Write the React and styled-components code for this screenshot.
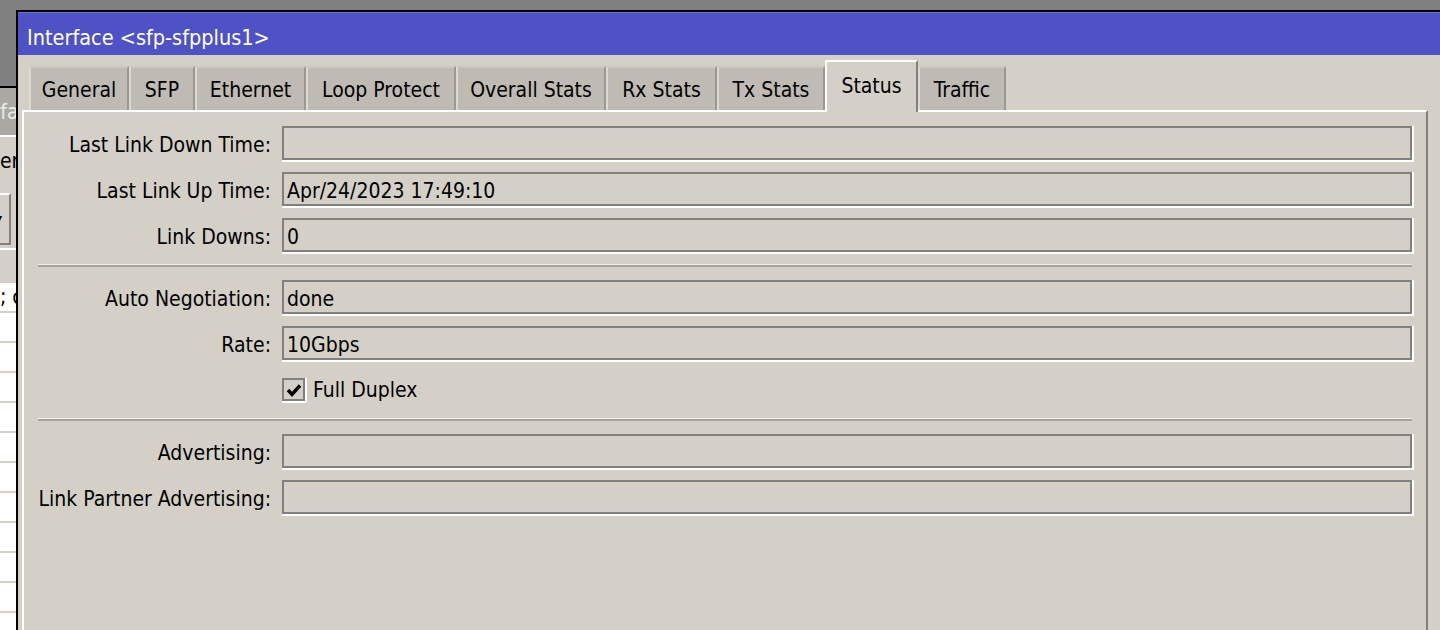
import React from "react";
import styled, { createGlobalStyle } from "styled-components";

const FONT = `"DejaVu Sans Condensed", "Liberation Sans", sans-serif`;

const Global = createGlobalStyle`
  html, body { margin: 0; padding: 0; background: #808080; }
  body { width: 1440px; height: 630px; overflow: hidden; }
  * { box-sizing: border-box; }
`;

const Desktop = styled.div`
  position: relative;
  width: 1440px;
  height: 630px;
  overflow: hidden;
  background: #808080;
  font-family: ${FONT};
  font-size: 21px;
  color: #000;
`;

/* ---------- background window (partly hidden behind) ---------- */
const BackWindow = styled.div`
  position: absolute;
  left: -74px;
  top: 86px;
  width: 110px;
  height: 560px;
  border-top: 2px solid #000;
  background: #d4d0c8;
  display: flex;
  flex-direction: column;
`;

const BackTitle = styled.div`
  height: 49px;
  padding-left: 30px;
  background: #aaa8a3;
  color: #ececec;
  border-bottom: 2px solid #fff;
  display: flex;
  align-items: center;
  white-space: nowrap;
`;

const BackToolbar = styled.div`
  height: 113px;
  border-bottom: 2px solid #fff;
  display: flex;
  flex-direction: column;
`;

const BackTabRow = styled.div`
  height: 48px;
  display: flex;
  align-items: center;
  padding-left: 49px;
`;

const BackTab = styled.div`
  padding-right: 2px;
  border-right: 2px solid #303030;
  line-height: 26px;
  white-space: nowrap;
`;

const BackButtonRow = styled.div`
  padding-top: 8px;
  padding-left: 45px;
`;

const BackButton = styled.div`
  width: 40px;
  height: 52px;
  border: 2px solid #fff;
  border-right-color: #808080;
  border-bottom-color: #808080;
  display: flex;
  align-items: center;
  justify-content: flex-end;
  padding-right: 7px;
  font-size: 11px;
`;

const BackGap = styled.div`
  height: 33px;
`;

const BackTable = styled.div`
  flex: 1;
  background: #fff;
`;

const BackRow = styled.div`
  height: 30px;
  border-bottom: 2px solid #d4d0c8;
  padding-left: 74px;
  display: flex;
  align-items: center;
  white-space: nowrap;
`;

/* ---------- main window ---------- */
const MainWindow = styled.div`
  position: absolute;
  left: 16px;
  top: 10px;
  width: 1430px;
  height: 640px;
  border-left: 2px solid #000;
  border-top: 2px solid #000;
  background: #d4d0c8;
  display: flex;
  flex-direction: column;
`;

const TitleBar = styled.div`
  height: 43px;
  border-top: 1px solid #6c6fd6;
  background: #4f52c4;
  color: #fff;
  font-size: 21.5px;
  display: flex;
  align-items: center;
  padding: 6px 0 0 9px;
  white-space: nowrap;
`;

const Body = styled.div`
  flex: 1;
  display: flex;
  flex-direction: column;
  padding: 5px 18px 0 4px;
`;

const TabStrip = styled.div`
  height: 50px;
  display: flex;
  align-items: flex-start;
  padding-left: 7px;
  position: relative;
  z-index: 1;
`;

const Tab = styled.div`
  width: ${(p) => p.$w}px;
  display: flex;
  align-items: center;
  justify-content: center;
  white-space: nowrap;
  ${(p) =>
    p.$active
      ? `
    height: 52px;
    margin-top: 0;
    padding-bottom: 3px;
    background: #d4d0c8;
    border-top: 2px solid #fff;
    border-left: 2px solid #fff;
    border-right: 2px solid #808080;
  `
      : `
    height: 44px;
    margin-top: 6px;
    padding-top: 2px;
    background: #bfbbb4;
    border-top: 2px solid #ccc8c1;
    border-left: 2px solid #dcd9d3;
    border-right: 2px solid #9b9891;
  `}
`;

const Panel = styled.div`
  flex: 1;
  border-top: 2px solid #fff;
  border-left: 2px solid #fff;
  border-right: 2px solid #808080;
  padding: 14px 14px 0 14px;
`;

const Form = styled.div`
  display: grid;
  grid-template-columns: 233px 1fr;
  column-gap: 11px;
  row-gap: 12px;
`;

const Label = styled.div`
  height: 34px;
  padding-top: 2px;
  line-height: 34px;
  text-align: right;
  white-space: nowrap;
`;

const Field = styled.div`
  height: 34px;
  border: 2px solid #808080;
  box-shadow: 2px 0 0 #fff, 0 2px 0 #fff, 2px 2px 0 #fff;
  padding: 2px 0 0 3px;
  line-height: 30px;
  white-space: nowrap;
  overflow: hidden;
`;

const Separator = styled.div`
  grid-column: 1 / -1;
  height: 3px;
  margin-bottom: 1px;
  border-top: 1px solid #efede9;
  border-bottom: 2px solid #a7a49d;
`;

const CheckRow = styled.label`
  height: 34px;
  display: flex;
  align-items: center;
  gap: 8px;
  padding-top: 1px;
`;

const CheckBox = styled.span`
  width: 23px;
  height: 23px;
  border: 2px solid #808080;
  box-shadow: 2px 0 0 #fff, 0 2px 0 #fff, 2px 2px 0 #fff;
  background: #d4d0c8;
  display: flex;
  align-items: center;
  justify-content: center;
`;

const tabs = [
  ["General", 100],
  ["SFP", 66],
  ["Ethernet", 111],
  ["Loop Protect", 150],
  ["Overall Stats", 150],
  ["Rx Stats", 111],
  ["Tx Stats", 108],
  ["Status", 93],
  ["Traffic", 88],
];

const rowsA = [
  ["Last Link Down Time:", ""],
  ["Last Link Up Time:", "Apr/24/2023 17:49:10"],
  ["Link Downs:", "0"],
];
const rowsB = [
  ["Auto Negotiation:", "done"],
  ["Rate:", "10Gbps"],
];
const rowsC = [
  ["Advertising:", ""],
  ["Link Partner Advertising:", ""],
];

const Rows = ({ rows }) =>
  rows.map(([l, v]) => (
    <React.Fragment key={l}>
      <Label>{l}</Label>
      <Field>{v}</Field>
    </React.Fragment>
  ));

export default function App() {
  return (
    <Desktop>
      <Global />
      <BackWindow>
        <BackTitle>Interface List</BackTitle>
        <BackToolbar>
          <BackTabRow>
            <BackTab>Inter</BackTab>
          </BackTabRow>
          <BackButtonRow>
            <BackButton>▼</BackButton>
          </BackButtonRow>
        </BackToolbar>
        <BackGap />
        <BackTable>
          {Array.from({ length: 12 }).map((_, i) => (
            <BackRow key={i}>{i === 0 ? "; c" : ""}</BackRow>
          ))}
        </BackTable>
      </BackWindow>

      <MainWindow>
        <TitleBar>Interface &lt;sfp-sfpplus1&gt;</TitleBar>
        <Body>
          <TabStrip>
            {tabs.map(([t, w]) => (
              <Tab key={t} $w={w} $active={t === "Status"}>
                {t}
              </Tab>
            ))}
          </TabStrip>
          <Panel>
            <Form>
              <Rows rows={rowsA} />
              <Separator />
              <Rows rows={rowsB} />
              <Label />
              <CheckRow>
                <CheckBox>
                  <svg width="16" height="16" viewBox="0 0 16 16">
                    <polyline
                      points="2,8 6,12.5 14,3.5"
                      fill="none"
                      stroke="#000"
                      strokeWidth="3.4"
                    />
                  </svg>
                </CheckBox>
                Full Duplex
              </CheckRow>
              <Separator />
              <Rows rows={rowsC} />
            </Form>
          </Panel>
        </Body>
      </MainWindow>
    </Desktop>
  );
}
